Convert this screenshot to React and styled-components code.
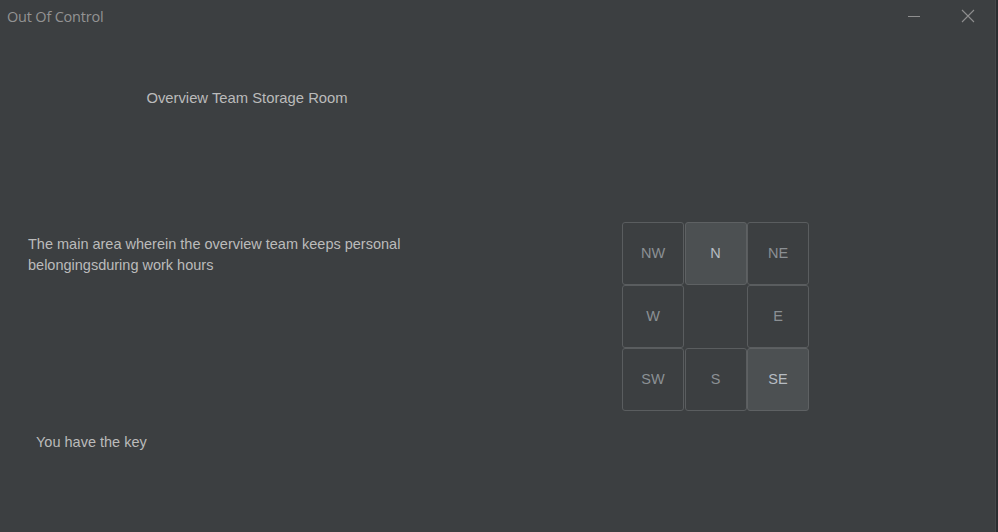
import React from 'react'
import styled, { createGlobalStyle } from 'styled-components'

const GlobalStyle = createGlobalStyle`
  html, body {
    margin: 0;
    padding: 0;
    background: #3c3f41;
  }
  body {
    font-family: "Liberation Sans", Arial, sans-serif;
    font-size: 14.5px;
    color: #bbbbbb;
  }
`

const Window = styled.div`
  width: 998px;
  height: 532px;
  display: flex;
  background: #3c3f41;
  overflow: hidden;
`

const Main = styled.div`
  flex: 1;
  display: flex;
  flex-direction: column;
`

const EdgeStrip = styled.div`
  width: 2px;
  background: #2b2d30;
  border-left: 1px solid #45484a;
`

const TitleBar = styled.div`
  height: 32px;
  display: flex;
  align-items: center;
  padding-left: 7px;
`

const Title = styled.span`
  flex: 1;
  color: #939393;
  font-size: 14.5px;
  font-family: "Open Sans", "Liberation Sans", sans-serif;
  letter-spacing: -0.2px;
`

const WinButton = styled.button`
  width: 54px;
  height: 32px;
  border: none;
  background: transparent;
  display: flex;
  align-items: center;
  justify-content: center;
  padding: 0;
`

const Body = styled.div`
  flex: 1;
  display: grid;
  grid-template-columns: 494px 1fr;
`

const Left = styled.div`
  display: flex;
  flex-direction: column;
`

const Heading = styled.div`
  margin-top: 58px;
  text-align: center;
  line-height: 17px;
  font-size: 14.8px;
`

const Description = styled.p`
  margin: 127px 0 0 28px;
  line-height: 21px;
  width: 400px;
`

const Status = styled.p`
  margin: 158px 0 0 36px;
  line-height: 17px;
`

const Right = styled.div`
  padding: 190px 0 0 128px;
`

const Compass = styled.div`
  display: grid;
  grid-template-columns: repeat(3, 62px);
  grid-template-rows: repeat(3, 62.5px);
  column-gap: 0.5px;
  row-gap: 0.5px;
`

const DirButton = styled.button`
  border: 1px solid ${p => (p.$active ? '#5e6163' : '#5a5d5f')};
  border-radius: 3px;
  background: ${p => (p.$active ? '#4c5052' : '#3c3f41')};
  color: ${p => (p.$active ? '#b6bcc2' : '#8b9094')};
  font-family: "Liberation Sans", Arial, sans-serif;
  font-size: 14.5px;
  padding: 0;
  cursor: pointer;
`

const Empty = styled.div``

const cells = [
  { label: 'NW' },
  { label: 'N', active: true },
  { label: 'NE' },
  { label: 'W' },
  null,
  { label: 'E' },
  { label: 'SW' },
  { label: 'S' },
  { label: 'SE', active: true },
]

export default function App() {
  return (
    <>
      <GlobalStyle />
      <Window>
        <Main>
          <TitleBar>
            <Title>Out Of Control</Title>
            <WinButton>
              <svg width="12" height="12" viewBox="0 0 12 12">
                <line x1="0" y1="6.5" x2="12" y2="6.5" stroke="#8f8f8f" strokeWidth="1" />
              </svg>
            </WinButton>
            <WinButton>
              <svg width="14" height="14" viewBox="0 0 14 14">
                <path d="M1 1L13 13M13 1L1 13" stroke="#8f8f8f" strokeWidth="1.1" />
              </svg>
            </WinButton>
          </TitleBar>
          <Body>
            <Left>
              <Heading>Overview Team Storage Room</Heading>
              <Description>
                The main area wherein the overview team keeps personal belongingsduring work hours
              </Description>
              <Status>You have the key</Status>
            </Left>
            <Right>
              <Compass>
                {cells.map((c, i) =>
                  c ? (
                    <DirButton key={i} $active={c.active}>{c.label}</DirButton>
                  ) : (
                    <Empty key={i} />
                  )
                )}
              </Compass>
            </Right>
          </Body>
        </Main>
        <EdgeStrip />
      </Window>
    </>
  )
}
